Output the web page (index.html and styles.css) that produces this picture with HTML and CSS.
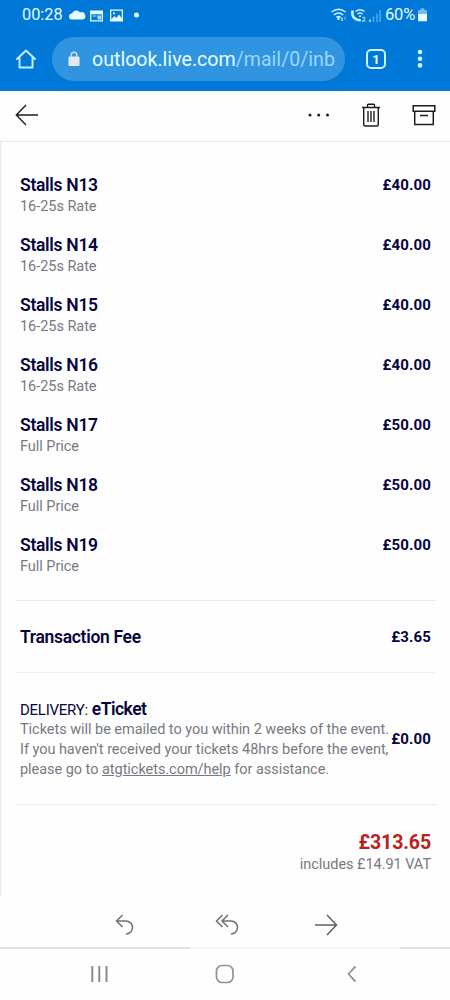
FILE: index.html
```html
<!DOCTYPE html>
<html lang="en">
<head>
<meta charset="utf-8">
<title>Mail</title>
<link rel="stylesheet" href="styles.css">
</head>
<body>
<header class="browser">
  <div class="status">
    <span class="clock">00:28</span>
    <svg class="status-left" width="72" height="16" viewBox="0 0 72 16" fill="#e4ffff">
      <path d="M3 12.500a3 3 0 0 1 0-6 4.500 4.500 0 0 1 8-1 3.700 3.700 0 0 1 3 7z"/>
      <path fill-rule="evenodd" d="M21 3.500h13v11H21zM22.300 7.200v6h10.400v-6z"/><path d="M23.500 8.500h4v1h-4zM28.500 8.500h3.500v4h-3.500z" opacity=".75"/>
      <path fill-rule="evenodd" d="M41 2.500h13v12H41zM42.300 3.800v8.700l3-3.500 2 2 2.700-3.500 2.700 4V3.800z"/><circle cx="45" cy="6.300" r="1.100"/>
      <circle cx="67.500" cy="8" r="2.500"/>
    </svg>
    <svg class="status-right" width="50" height="16" viewBox="0 0 50 16" fill="none" stroke="#c9f0ff" stroke-width="1.500">
      <path d="M.500 5q7-5.500 14 0M2.900 7.900q4.600-3.800 9.200 0M5.300 10.500q2.200-1.800 4.400 0"/><path d="M7.500 10v3" stroke-width="2"/><path d="M11 10.500v3.500" stroke-width="1.300"/><path d="M14 9.500v3.500" stroke-width="1" opacity=".6"/>
      <path d="M21.800 3.500q-1.500 4.500 1.500 7.500 3 2.500 6.500 2.300" stroke-width="2.600"/><path d="M24.500 4.500q4.500-3.500 9 0M26.500 7q2.500-2 5 0M28 9.200h2.200" stroke-width="1.400"/><path d="M31.500 10.500q3-1 2.500 1l-2.700 2.500h3.200" stroke-width="1"/>
      <path d="M39 12.500v2.500" stroke-width="1.500"/><path d="M42.500 9.500V15M46 6.500V15M49 3v12" opacity=".4" stroke-width="1.500"/>
    </svg>
    <span class="percent">60%</span>
    <svg width="9" height="14" viewBox="0 0 10 15"><path d="M3 0h4v2h2q1 0 1 1v3H0V3q0-1 1-1h2z" fill="#75b8ea"/><path d="M0 6h10v7.500q0 1-1 1H1q-1 0-1-1z" fill="#e8ffff"/></svg>
  </div>
  <div class="navbar">
    <svg class="home" width="20" height="20" viewBox="0 0 20 20" fill="none" stroke="#c9edff" stroke-width="1.900" stroke-linejoin="round" stroke-linecap="round"><path d="M1 10l9-8.500 9 8.500M3.500 8.500v10h13v-10"/></svg>
    <div class="address">
      <svg width="12" height="16" viewBox="0 0 12 16"><path d="M3.300 7V4a2.700 2.700 0 0 1 5.400 0v3" fill="none" stroke="#d3dce9" stroke-width="1.500"/><rect x="0.500" y="5.500" width="11" height="9.500" rx="1" fill="#e6e7ef"/></svg>
      <span class="url">outlook.live.com<span class="path">/mail/0/inb</span></span>
    </div>
    <span class="tabs">1</span>
    <svg class="more" width="6" height="20" viewBox="0 0 6 20" fill="#d0f2ff"><circle cx="3" cy="3" r="2.300"/><circle cx="3" cy="9.700" r="2.300"/><circle cx="3" cy="16.400" r="2.300"/></svg>
  </div>
</header>
<nav class="toolbar">
  <svg class="back" width="24" height="22" viewBox="0 0 24 22" fill="none" stroke="#1d1d1d" stroke-width="1.400"><path d="M23 11H1.500M11 1L1.300 11 11 21"/></svg>
  <svg class="dots" width="22" height="4" viewBox="0 0 22 4" fill="#1d1d1d"><circle cx="2" cy="2" r="1.500"/><circle cx="10.700" cy="2" r="1.500"/><circle cx="19.500" cy="2" r="1.500"/></svg>
  <svg class="trash" width="20" height="24" viewBox="0 0 20 24" fill="none" stroke="#1d1d1d" stroke-width="1.400"><path d="M1 4.500h18M6.500 4V2q0-.800.800-.800h5.400q.800 0 .800.800v2M2.700 4.500v17q0 1.500 1.500 1.500h11.600q1.500 0 1.500-1.500v-17M7 8v11M10 8v11M13 8v11"/></svg>
  <svg width="24" height="22" viewBox="0 0 24 22" fill="none" stroke="#1d1d1d" stroke-width="1.500"><path d="M1.200 1.700h21.600v5.500H1.200zM2.700 7.200v13.300h18.600V7.200M8 11.500h8"/></svg>
</nav>
<main class="message">
  <section class="seats">
    <div class="seat"><div><h2>Stalls N13</h2><p>16-25s Rate</p></div><b>£40.00</b></div>
    <div class="seat"><div><h2>Stalls N14</h2><p>16-25s Rate</p></div><b>£40.00</b></div>
    <div class="seat"><div><h2>Stalls N15</h2><p>16-25s Rate</p></div><b>£40.00</b></div>
    <div class="seat"><div><h2>Stalls N16</h2><p>16-25s Rate</p></div><b>£40.00</b></div>
    <div class="seat"><div><h2>Stalls N17</h2><p>Full Price</p></div><b>£50.00</b></div>
    <div class="seat"><div><h2>Stalls N18</h2><p>Full Price</p></div><b>£50.00</b></div>
    <div class="seat"><div><h2>Stalls N19</h2><p>Full Price</p></div><b>£50.00</b></div>
  </section>
  <section class="fee"><h2>Transaction Fee</h2><b>£3.65</b></section>
  <section class="delivery">
    <div>
      <h2><span class="label">DELIVERY:</span> eTicket</h2>
      <p>Tickets will be emailed to you within 2 weeks of the event.<br>If you haven't received your tickets 48hrs before the event,<br>please go to <u>atgtickets.com/help</u> for assistance.</p>
    </div>
    <b>£0.00</b>
  </section>
  <section class="total"><strong>£313.65</strong><p class="vat">includes £14.91 VAT</p></section>
</main>
<div class="reply">
  <svg class="reply-one" width="20" height="22" viewBox="0 0 20 22" fill="none" stroke="#707070" stroke-width="1.500"><path d="M7.500 1L1.500 7l6 6M1.500 7H11a6.500 6.500 0 0 1 0 13"/></svg>
  <svg class="reply-all" width="24" height="22" viewBox="0 0 24 22" fill="none" stroke="#707070" stroke-width="1.500"><path d="M7.500 1l-6 6 6 6M13 1L7 7l6 6M7 7h9a6.500 6.500 0 0 1 0 13"/></svg>
  <svg class="forward" width="24" height="22" viewBox="0 0 24 22" fill="none" stroke="#606060" stroke-width="1.500"><path d="M1 11h21M13 1l9.500 10L13 21"/></svg>
</div>
<div class="divider"></div>
<footer class="system">
  <svg class="recent" width="17" height="18" viewBox="0 0 17 18" stroke="#858585" stroke-width="1.900"><path d="M1.300 1v16M8.300 1v16M15.500 1v16"/></svg>
  <svg class="home-key" width="20" height="20" viewBox="0 0 20 20" fill="none" stroke="#929292" stroke-width="1.700"><rect x="1.500" y="1.500" width="16.500" height="17" rx="5.500"/></svg>
  <svg class="back-key" width="10" height="18" viewBox="0 0 10 18" fill="none" stroke="#929292" stroke-width="1.800"><path d="M8.500 1.300L1.500 9l7 7.700"/></svg>
</footer>
</body>
</html>
```
FILE: styles.css
```css
* { box-sizing: border-box; }
body { margin: 0; width: 450px; height: 1000px; overflow: hidden; background: #fefefe; font-family: Roboto, sans-serif; display: flex; flex-direction: column; }
h2, p { margin: 0; white-space: nowrap; }
svg { display: block; flex: none; }
.browser { height: 90.500px; flex: none; background: #0078d7; }
.status { display: flex; align-items: center; height: 29px; padding: 0 21px 0 22px; color: #e4fbff; }
.clock { width: 41px; margin-right: 6px; font-size: 16.300px; }
.status-right { margin-left: 190px; }
.percent { margin: 0 2px 0 4px; width: 31px; font-size: 16.500px; letter-spacing: -.2px; }
.navbar { display: flex; align-items: center; height: 60px; padding-left: 16px; }
.address { display: flex; align-items: center; width: 293px; height: 44px; margin-left: 16px; padding-left: 16px; border-radius: 22px; background: #3194e1; overflow: hidden; }
.url { margin-left: 12px; padding-top: 1px; color: #e4ffff; font-size: 19.600px; white-space: nowrap; }
.path { color: #9dd7ff; }
.tabs { display: grid; place-items: center; width: 20px; height: 20px; margin-left: 21px; border: 2px solid #cdf0ff; border-radius: 5px; color: #e4ffff; font-size: 13px; font-weight: 700; }
.more { margin-left: 31px; }
.toolbar { display: flex; align-items: center; height: 51px; flex: none; padding: 0 14px 2px 15px; border-bottom: 1px solid #e9e9e9; }
.dots { margin-left: 269px; }
.trash { margin: 0 31px; }
.message { height: 754px; flex: none; padding: 0 14px 0 15px; border-left: 1px solid #ebebeb; color: #07053f; }
.message section { padding-left: 4px; padding-right: 5px; }
h2 { font-size: 17.500px; line-height: 22px; font-weight: 600; letter-spacing: -.3px; }
p { font-size: 14.500px; line-height: 20px; letter-spacing: -.04px; color: #777982; }
b { font-size: 15px; line-height: 22px; letter-spacing: .15px; }
.seats { height: 459px; padding-top: 32px; border-bottom: 1px solid #e9e9e9; }
.seat { display: flex; justify-content: space-between; height: 60px; }
.seat p { line-height: 21px; }
.fee { display: flex; align-items: center; justify-content: space-between; height: 72px; border-bottom: 1px solid #f0f0f0; }
.fee h2 { padding-top: 2px; letter-spacing: -.32px; }
.fee b { padding-top: 1px; }
.delivery { display: flex; align-items: center; justify-content: space-between; height: 132px; border-bottom: 1px solid #ebebeb; }
.delivery h2 { margin: 1px 0 -1px; letter-spacing: -.5px; }
.delivery b { padding-top: 2px; }
.label { font-size: 15px; font-weight: 400; letter-spacing: -.25px; }
.total { padding-top: 26px; text-align: right; }
.total strong { display: block; font-size: 19.500px; line-height: 23px; letter-spacing: -.1px; color: #b9211e; }
.vat { line-height: 22px; }
.reply { display: flex; align-items: center; height: 51px; flex: none; padding-top: 8px; }
.divider { height: 2px; flex: none; background: linear-gradient(90deg, #e3e3e3 0 190px, #f3f3f3 190px 400px, #e3e3e3 400px); }
.reply-one { margin-left: 115px; }
.reply-all { margin-left: 80px; }
.forward { margin-left: 75px; }
.system { display: flex; align-items: center; height: 52px; }
.recent { margin-left: 91px; }
.home-key { margin-left: 107px; }
.back-key { margin-left: 112px; }
```
